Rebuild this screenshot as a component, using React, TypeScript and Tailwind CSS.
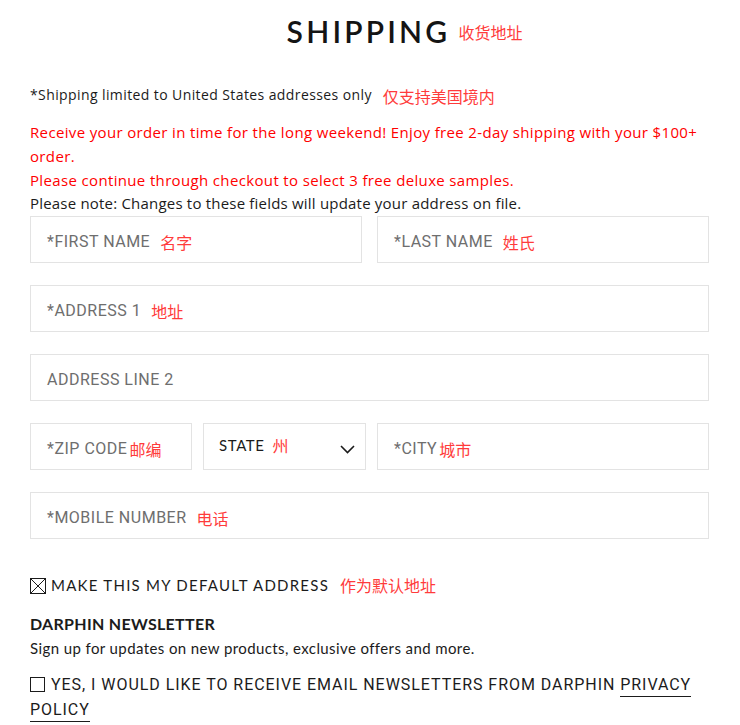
const sans = { fontFamily: '"Open Sans", "Noto Sans CJK SC", sans-serif' };

function Note({ children }: { children: React.ReactNode }) {
  return (
    <span
      className="text-[16px] text-[#ff3b3b]"
      style={{ fontFamily: '"Noto Sans CJK SC", sans-serif' }}
    >
      {children}
    </span>
  );
}

function Field({
  label,
  note,
  className = '',
}: {
  label: string;
  note?: string;
  className?: string;
}) {
  return (
    <div
      className={`flex h-[47px] items-center gap-[10px] border border-[#e3e3e3] bg-white pt-[5px] pl-[16px] ${className}`}
    >
      <span className="font-['Roboto'] text-[16px] tracking-[0.5px] text-[#6e6e6e]">
        {label}
      </span>
      {note && <Note>{note}</Note>}
    </div>
  );
}

export default function App() {
  return (
    <div className="w-[740px] bg-white pl-[30px] pr-[31px] text-[#1b1b1b]" style={sans}>
      <div className="flex items-center justify-center pt-[9px] pl-[70px]">
        <h1 className="font-['Lato'] text-[30px] font-semibold tracking-[3.2px] text-[#141414]">
          SHIPPING
        </h1>
        <span className="ml-[8px] mt-[2px]">
          <Note>收货地址</Note>
        </span>
      </div>

      <div className="mt-[26px] flex items-center">
        <span className="text-[14px] tracking-[0.4px]">
          *Shipping limited to United States addresses only
        </span>
        <span className="ml-[11px] mt-[4px]">
          <Note>仅支持美国境内</Note>
        </span>
      </div>

      <div className="mt-[11px] font-['Open_Sans'] text-[15px] leading-[24px] tracking-[0.35px] text-[#ff0000]">
        <p>
          Receive your order in time for the long weekend! Enjoy free 2-day shipping with your $100+
          <br />
          order.
        </p>
        <p>Please continue through checkout to select 3 free deluxe samples.</p>
      </div>
      <p className="pb-[2px] font-['Open_Sans'] text-[15px] leading-[22px] tracking-[0.2px] text-[#1b1b1b]">
        Please note: Changes to these fields will update your address on file.
      </p>

      <div className="flex gap-[15px]">
        <Field label="*FIRST NAME" note="名字" className="flex-1" />
        <Field label="*LAST NAME" note="姓氏" className="flex-1" />
      </div>
      <Field label="*ADDRESS 1" note="地址" className="mt-[22px]" />
      <Field label="ADDRESS LINE 2" className="mt-[22px]" />
      <div className="mt-[22px] flex gap-[11px]">
        <Field label="*ZIP CODE" note="邮编" className="w-[162px] !gap-[2px]" />
        <div className="flex h-[47px] w-[163px] items-start justify-between border border-[#e3e3e3] pt-[9px] pl-[15px] pr-[10px]">
          <div className="flex items-center gap-[8px]">
            <span className="font-['Lato'] text-[15px] tracking-[0.6px] text-[#1b1b1b]">
              STATE
            </span>
            <Note>州</Note>
          </div>
          <svg width="15" height="9" viewBox="0 0 15 9" className="mt-[12px]">
            <path d="M1 1 L7.5 7.5 L14 1" fill="none" stroke="#1b1b1b" strokeWidth="1.6" />
          </svg>
        </div>
        <Field label="*CITY" note="城市" className="flex-1 !gap-[2px]" />
      </div>
      <Field label="*MOBILE NUMBER" note="电话" className="mt-[22px]" />

      <div className="mt-[34px] flex items-center">
        <svg width="16" height="16" viewBox="0 0 16 16" className="shrink-0">
          <rect x="0.5" y="0.5" width="15" height="15" fill="none" stroke="#1b1b1b" />
          <path d="M1 1 L15 15 M15 1 L1 15" stroke="#1b1b1b" strokeWidth="1" />
        </svg>
        <span className="ml-[5px] font-['Lato'] text-[15px] tracking-[1.25px]">
          MAKE THIS MY DEFAULT ADDRESS
        </span>
        <span className="ml-[11px]">
          <Note>作为默认地址</Note>
        </span>
      </div>

      <h2 className="mt-[14px] font-['Lato'] text-[16px] font-bold tracking-[0.3px]">
        DARPHIN NEWSLETTER
      </h2>
      <p className="mt-[1px] font-['Lato'] text-[15px] tracking-[0.4px]">
        Sign up for updates on new products, exclusive offers and more.
      </p>

      <div className="mt-[12px] pb-[10px] font-['Roboto'] text-[16px] leading-[25px] tracking-[0.95px]">
        <span className="mr-[6px] inline-block h-[15px] w-[15px] translate-y-[2px] border border-[#1b1b1b]" />
        YES, I WOULD LIKE TO RECEIVE EMAIL NEWSLETTERS FROM DARPHIN{' '}
        <a className="border-b border-[#1b1b1b] pb-[2px]">PRIVACY</a>{' '}
        <a className="border-b border-[#1b1b1b] pb-[2px]">POLICY</a>
      </div>
    </div>
  );
}
